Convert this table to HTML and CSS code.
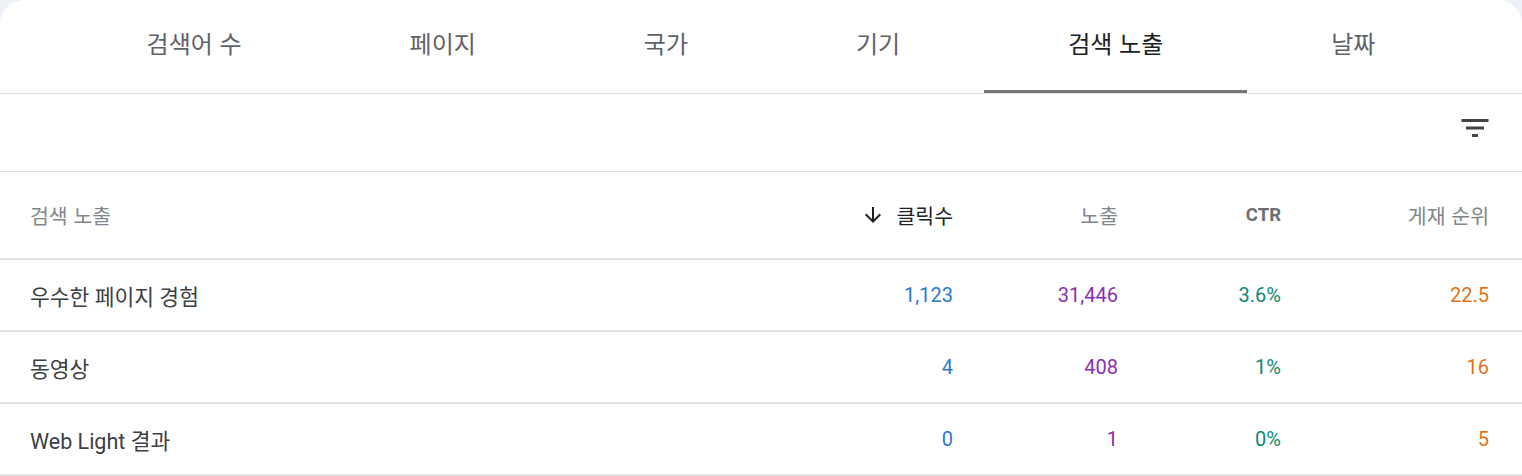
FILE: index.html
```html
<!DOCTYPE html>
<html lang="ko">
<head>
<meta charset="utf-8">
<title>검색 노출</title>
<link rel="stylesheet" href="styles.css">
</head>
<body>
<div class="card">
  <nav class="tabs">
    <div class="tab">검색어 수</div>
    <div class="tab">페이지</div>
    <div class="tab">국가</div>
    <div class="tab">기기</div>
    <div class="tab active">검색 노출</div>
    <div class="tab">날짜</div>
  </nav>
  <div class="toolbar">
    <svg class="filter-icon" viewBox="0 0 24 24" width="36" height="36" aria-hidden="true">
      <path d="M10 18h4v-2h-4v2zM3 6v2h18V6H3zm3 7h12v-2H6v2z" fill="#444"/>
    </svg>
  </div>
  <div class="table">
    <div class="row head">
      <div class="cell name">검색 노출</div>
      <div class="cell num sorted"><svg class="arrow" viewBox="0 0 24 24" width="24" height="24" aria-hidden="true"><path d="M20 12l-1.41-1.41L13 16.17V4h-2v12.17l-5.58-5.59L4 12l8 8 8-8z" fill="#202124"/></svg>클릭수</div>
      <div class="cell num">노출</div>
      <div class="cell num ctr">CTR</div>
      <div class="cell num">게재 순위</div>
    </div>
    <div class="row">
      <div class="cell name">우수한 페이지 경험</div>
      <div class="cell num clicks">1,123</div>
      <div class="cell num impr">31,446</div>
      <div class="cell num ctrv">3.6%</div>
      <div class="cell num pos">22.5</div>
    </div>
    <div class="row">
      <div class="cell name">동영상</div>
      <div class="cell num clicks">4</div>
      <div class="cell num impr">408</div>
      <div class="cell num ctrv">1%</div>
      <div class="cell num pos">16</div>
    </div>
    <div class="row">
      <div class="cell name">Web Light 결과</div>
      <div class="cell num clicks">0</div>
      <div class="cell num impr">1</div>
      <div class="cell num ctrv">0%</div>
      <div class="cell num pos">5</div>
    </div>
  </div>
</div>
</body>
</html>
```

FILE: styles.css
```css
* { box-sizing: border-box; }
html, body { margin: 0; padding: 0; }
body {
  background: #eef0f8;
  font-family: Roboto, "Noto Sans CJK KR", sans-serif;
  color: #202124;
}
.card {
  background: #fff;
  border-radius: 24px 24px 0 0;
  width: 1522px;
  height: 476px;
  overflow: hidden;
}
.tabs {
  display: flex;
  justify-content: center;
  height: 94px;
  border-bottom: 1px solid #e0e0e0;
}
.tab {
  height: 93px;
  padding: 0 84px 5px;
  display: flex;
  align-items: center;
  justify-content: center;
  font-family: "Noto Sans CJK KR", sans-serif;
  font-size: 24px;
  color: #5f6368;
  border-bottom: 3px solid transparent;
  white-space: nowrap;
}
.tab.active {
  color: #202124;
  border-bottom-color: #757575;
}
.toolbar {
  height: 78px;
  border-bottom: 1px solid #e0e0e0;
  display: flex;
  justify-content: flex-end;
  align-items: center;
  padding: 0 29px 10px 0;
}
.filter-icon { display: block; }
.row {
  display: grid;
  grid-template-columns: 1fr 165px 165px 163px 208px;
  padding: 0 33px 0 30px;
  height: 72px;
  border-bottom: 2px solid #e2e2e2;
  align-items: center;
}
.row.head {
  height: 88px;
}
.cell.name {
  font-family: Roboto, "Noto Sans CJK KR", sans-serif;
  font-size: 21.5px;
  color: #3c4043;
}
.head .cell.name {
  font-family: "Noto Sans CJK KR", sans-serif;
  font-size: 20.5px;
  color: #80868b;
}
.cell.num {
  text-align: right;
  font-size: 20px;
  display: flex;
  justify-content: flex-end;
  align-items: center;
}
.head .cell.num {
  font-family: "Noto Sans CJK KR", sans-serif;
  font-size: 20.5px;
  color: #80868b;
}
.head .cell.sorted { color: #202124; }
.arrow { margin-right: 11px; }
.head .cell.ctr {
  font-family: Roboto, sans-serif;
  font-weight: 700;
  font-size: 18.5px;
  color: #6b6f73;
}
.clicks { color: #2b78d6; }
.impr { color: #8a2fb0; }
.ctrv { color: #0e8874; }
.pos { color: #e0731a; }
```
